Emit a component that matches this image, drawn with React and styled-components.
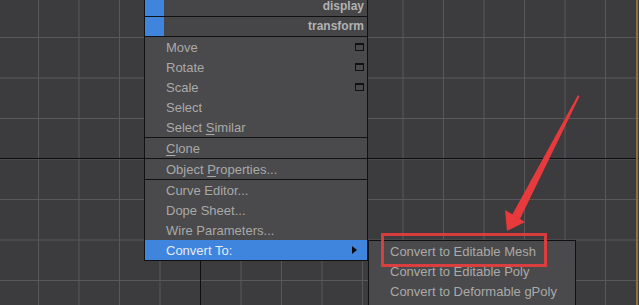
import React from "react";
import styled, { createGlobalStyle } from "styled-components";

const Global = createGlobalStyle`
  html, body { margin: 0; padding: 0; background: #3c3b3d; }
  body { font-family: "Liberation Sans", Arial, sans-serif; }
`;

const Viewport = styled.div`
  position: relative;
  width: 639px;
  height: 305px;
  overflow: hidden;
  background-color: #3c3b3d;
  background-image:
    linear-gradient(to right, transparent 636px, #8a7442 636px, #8a7442 638px, transparent 638px),
    linear-gradient(to right, transparent 200px, #0e0e0e 200px, #0e0e0e 201.5px, transparent 201.5px),
    linear-gradient(to bottom, transparent 158px, #0e0e0e 158px, #0e0e0e 159.5px, transparent 159.5px),
    linear-gradient(to right, #58575a 1px, transparent 1px),
    linear-gradient(to bottom, #58575a 1px, transparent 1px);
  background-size: 100% 100%, 100% 100%, 100% 100%, 40.5px 40.5px, 40.5px 40.5px;
  background-position: 0 0, 0 0, 0 0, 38px 37px, 38px 37px;
`;

const Menu = styled.div`
  position: absolute;
  left: ${(p) => p.$left}px;
  top: ${(p) => p.$top}px;
  width: ${(p) => p.$width}px;
  background: #4a494b;
  border: 1px solid #111;
  box-sizing: border-box;
  font-size: 13px;
  color: #aaaaaa;
`;

const Header = styled.div`
  display: flex;
  height: 19px;
  border-bottom: 1px solid #111;
  background: #464547;
`;

const Strip = styled.div`
  width: 19px;
  background: #3f85de;
`;

const HeaderLabel = styled.div`
  flex: 1;
  text-align: right;
  padding-right: 3px;
  font-size: 12px;
  font-weight: bold;
  line-height: 19px;
  color: #b2b2b2;
`;

const Group = styled.div`
  border-bottom: ${(p) => (p.$last ? "none" : "1px solid #111")};
`;

const Item = styled.div`
  display: flex;
  align-items: center;
  justify-content: space-between;
  height: 20px;
  padding: 0 3px 0 ${(p) => p.$indent}px;
  background: ${(p) => (p.$active ? "#3f85de" : "transparent")};
  color: ${(p) => (p.$active ? "#e6ecf4" : "#a9a9a9")};
  white-space: nowrap;
  u { text-decoration: underline; text-underline-offset: 2px; }
`;

const WinIcon = styled.span`
  width: 9px;
  height: 8px;
  box-sizing: border-box;
  border: 1px solid #101010;
  border-top-width: 2px;
`;

const SubArrow = styled.span`
  width: 0;
  height: 0;
  margin-right: 7px;
  border-top: 4px solid transparent;
  border-bottom: 4px solid transparent;
  border-left: 5px solid #0a0a0a;
`;

const Highlight = styled.div`
  position: absolute;
  left: 381px;
  top: 233px;
  width: 166px;
  height: 34px;
  box-sizing: border-box;
  border: 3px solid rgba(230, 62, 62, 0.92);
`;

const Overlay = styled.svg`
  position: absolute;
  left: 0;
  top: 0;
  pointer-events: none;
`;

const main = [
  [
    { label: "Move", icon: true },
    { label: "Rotate", icon: true },
    { label: "Scale", icon: true },
    { label: "Select" },
    { label: <>Select <u>S</u>imilar</> },
  ],
  [{ label: <><u>C</u>lone</> }],
  [{ label: <>Object <u>P</u>roperties...</> }],
  [
    { label: "Curve Editor..." },
    { label: "Dope Sheet..." },
    { label: "Wire Parameters..." },
    { label: "Convert To:", active: true, sub: true },
  ],
];

const convert = [
  "Convert to Editable Mesh",
  "Convert to Editable Poly",
  "Convert to Deformable gPoly",
];

export default function App() {
  return (
    <>
      <Global />
      <Viewport>
        <Menu $left={144} $top={-4} $width={224}>
          {["display", "transform"].map((h) => (
            <Header key={h}>
              <Strip />
              <HeaderLabel>{h}</HeaderLabel>
            </Header>
          ))}
          {main.map((group, gi) => (
            <Group key={gi} $last={gi === main.length - 1}>
              {group.map((it, i) => (
                <Item key={i} $indent={21} $active={it.active}>
                  <span>{it.label}</span>
                  {it.icon && <WinIcon />}
                  {it.sub && <SubArrow />}
                </Item>
              ))}
            </Group>
          ))}
        </Menu>

        <Menu $left={368} $top={240} $width={208}>
          {convert.map((c) => (
            <Item key={c} $indent={21}>
              <span>{c}</span>
            </Item>
          ))}
          <Item $indent={21} />
        </Menu>

        <Highlight />

        <Overlay width="639" height="305" viewBox="0 0 639 305">
          <polygon points="578,95 579.5,96.5 520,219 512,215" fill="#e8393c" />
          <polygon points="507,231 505,210 525,222" fill="#e8393c" />
        </Overlay>
      </Viewport>
    </>
  );
}
